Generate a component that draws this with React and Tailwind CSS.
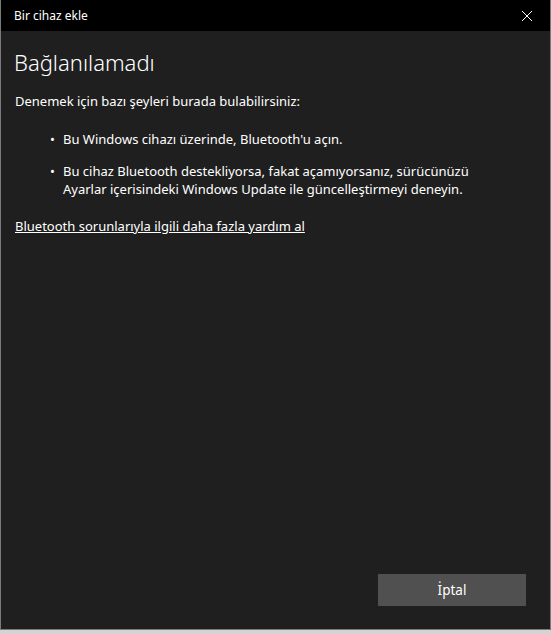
export default function App() {
  return (
    <div
      className="w-[551px] h-[634px] flex flex-col bg-[#d4d4d4] text-white"
      style={{ fontFamily: '"Noto Sans", "Open Sans", sans-serif' }}
    >
      <div className="flex-1 flex flex-col border-x border-b border-[#7a7a7a] bg-[#1f1f1f]">
        {/* title bar */}
        <div className="h-[31px] bg-black flex items-center justify-between pl-[13px] pr-[17px]">
          <span className="text-[12px] leading-none">Bir cihaz ekle</span>
          <svg width="12" height="12" viewBox="0 0 12 12" className="mt-[1px]">
            <path d="M1 1L11 11M11 1L1 11" stroke="white" strokeWidth="1" />
          </svg>
        </div>

        {/* content */}
        <div className="flex-1 flex flex-col px-[13px]">
          <h1 className="text-[22px] font-light leading-none mt-[20px]">Bağlanılamadı</h1>
          <p className="text-[13px] mt-[19px] leading-[18px] pl-[1px]">
            Denemek için bazı şeyleri burada bulabilirsiniz:
          </p>
          <ul className="mt-[20px] flex flex-col gap-[14px] text-[13px] leading-[18px]">
            <li className="flex">
              <span className="w-[49px] pl-[36px] shrink-0">•</span>
              <span>Bu Windows cihazı üzerinde, Bluetooth'u açın.</span>
            </li>
            <li className="flex">
              <span className="w-[49px] pl-[36px] shrink-0">•</span>
              <span>
                Bu cihaz Bluetooth destekliyorsa, fakat açamıyorsanız, sürücünüzü
                <br />
                Ayarlar içerisindeki Windows Update ile güncelleştirmeyi deneyin.
              </span>
            </li>
          </ul>
          <a className="mt-[19px] text-[13px] leading-[18px] underline pl-[1px] self-start">
            Bluetooth sorunlarıyla ilgili daha fazla yardım al
          </a>

          <div className="flex-1" />
          <div className="flex justify-end pr-[11px] pb-[23px]">
            <button className="w-[148px] h-[32px] bg-[#505050] text-[13.5px]">İptal</button>
          </div>
        </div>
      </div>
      <div className="h-[4px]" />
    </div>
  );
}
